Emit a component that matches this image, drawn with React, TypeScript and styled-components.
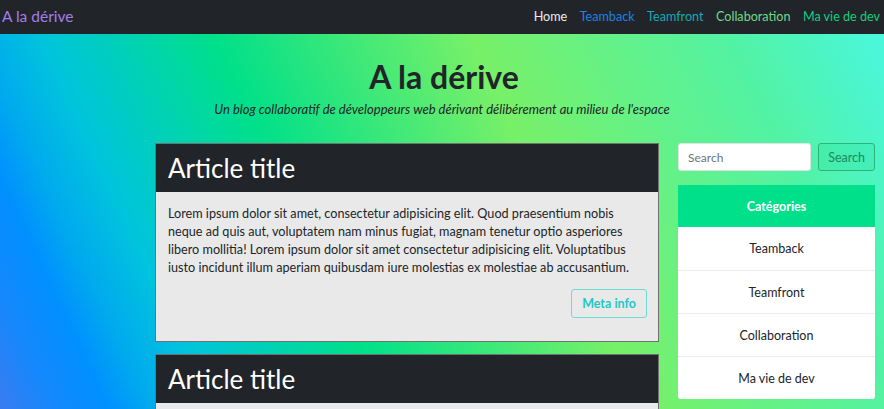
import React from "react";
import styled, { createGlobalStyle } from "styled-components";

const GlobalStyle = createGlobalStyle`
  html, body { margin: 0; padding: 0; }
  body {
    font-family: "Lato", "Noto Sans", "Liberation Sans", sans-serif;
    color: #212529;
    background: #212529;
  }
  * { box-sizing: border-box; }
`;

const Page = styled.div`
  min-height: 100vh;
  display: flex;
  flex-direction: column;
`;

const NavBar = styled.nav`
  height: 34px;
  background: #212529;
  display: flex;
  align-items: center;
  justify-content: space-between;
  padding: 0 4px 2px 2px;
`;

const Brand = styled.a`
  color: #a57ee9;
  font-size: 15.5px;
  text-decoration: none;
`;

const NavLinks = styled.div`
  display: flex;
  gap: 12.5px;
`;

const NavLink = styled.a<{ $color: string }>`
  color: ${(p) => p.$color};
  font-size: 12.6px;
  text-decoration: none;
`;

const Body = styled.div`
  flex: 1;
  background: linear-gradient(
    65deg,
    #3a7bf0 0%,
    #1588fc 5%,
    #0090ff 10%,
    #00aaee 14%,
    #00c4dc 20%,
    #00e08a 36%,
    #78f068 60%,
    #52f2a4 84%,
    #4af7d8 97%
  );
  background-attachment: fixed;
  padding-bottom: 20px;
`;

const Header = styled.header`
  text-align: center;
  padding: 24px 0 0 0;
`;

const Title = styled.h1`
  margin: 0 0 0 4px;
  font-size: 32px;
  font-weight: 700;
  color: #212529;
  line-height: 38px;
`;

const Subtitle = styled.p`
  margin: 4px 0 0 0;
  font-size: 13px;
  font-style: italic;
  color: #212529;
  line-height: 18px;
`;

const Content = styled.div`
  display: flex;
  align-items: flex-start;
  gap: 19px;
  padding: 25px 9px 0 155px;
`;

const Articles = styled.div`
  width: 504px;
  display: flex;
  flex-direction: column;
  gap: 12px;
`;

const Card = styled.article`
  border: 1px solid #707070;
  background: #e9e9e9;
`;

const CardHeader = styled.div`
  background: #212529;
  height: 48px;
  display: flex;
  align-items: center;
  padding: 0 12px;
`;

const CardTitle = styled.h2`
  margin: 0;
  color: #ffffff;
  font-size: 26px;
  font-weight: 400;
`;

const CardBody = styled.div`
  padding: 13px 11px 23px 12px;
  display: flex;
  flex-direction: column;
`;

const CardText = styled.p`
  margin: 0;
  font-size: 12.65px;
  line-height: 18px;
  color: #212529;
`;

const MetaButton = styled.button`
  align-self: flex-end;
  margin-top: 12px;
  height: 29px;
  padding: 0 10px;
  background: transparent;
  border: 1px solid #6fdad6;
  border-radius: 3px;
  color: #1cc8c8;
  font-family: inherit;
  font-weight: 700;
  font-size: 12.5px;
`;

const Sidebar = styled.aside`
  width: 197px;
  display: flex;
  flex-direction: column;
  gap: 14px;
`;

const SearchRow = styled.form`
  display: flex;
  gap: 7px;
`;

const SearchInput = styled.input`
  flex: 1;
  min-width: 0;
  height: 28px;
  border: 1px solid #dfe3e6;
  border-radius: 3px;
  background: #fff;
  padding: 0 9px;
  font-family: inherit;
  font-size: 12px;
  color: #212529;
  &::placeholder { color: #6c757d; }
`;

const SearchButton = styled.button`
  height: 28px;
  padding: 0 9px;
  border: 1px solid #2fb37a;
  border-radius: 3px;
  background: rgba(0, 200, 120, 0.12);
  color: #1e8a5c;
  font-family: inherit;
  font-size: 12.5px;
`;

const CatCard = styled.div`
  background: #fff;
  border-radius: 0 0 3px 3px;
  overflow: hidden;
`;

const CatHeader = styled.div`
  background: #00e08a;
  height: 42px;
  display: flex;
  align-items: center;
  justify-content: center;
  color: #fff;
  font-weight: 700;
  font-size: 12.5px;
`;

const CatItem = styled.a`
  display: flex;
  align-items: center;
  justify-content: center;
  height: 43px;
  color: #212529;
  font-size: 12.5px;
  text-decoration: none;
  & + & { border-top: 1px solid #ececec; }
`;

const lorem =
  "Lorem ipsum dolor sit amet, consectetur adipisicing elit. Quod praesentium nobis neque ad quis aut, voluptatem nam minus fugiat, magnam tenetur optio asperiores libero mollitia! Lorem ipsum dolor sit amet consectetur adipisicing elit. Voluptatibus iusto incidunt illum aperiam quibusdam iure molestias ex molestiae ab accusantium.";

const links = [
  { label: "Home", color: "#ececec" },
  { label: "Teamback", color: "#1b82e2" },
  { label: "Teamfront", color: "#15aab3" },
  { label: "Collaboration", color: "#6fd98a" },
  { label: "Ma vie de dev", color: "#12cf7f" },
];

const categories = ["Teamback", "Teamfront", "Collaboration", "Ma vie de dev"];

function Article() {
  return (
    <Card>
      <CardHeader>
        <CardTitle>Article title</CardTitle>
      </CardHeader>
      <CardBody>
        <CardText>{lorem}</CardText>
        <MetaButton>Meta info</MetaButton>
      </CardBody>
    </Card>
  );
}

export default function App() {
  return (
    <Page>
      <GlobalStyle />
      <NavBar>
        <Brand href="#">A la dérive</Brand>
        <NavLinks>
          {links.map((l) => (
            <NavLink key={l.label} href="#" $color={l.color}>
              {l.label}
            </NavLink>
          ))}
        </NavLinks>
      </NavBar>
      <Body>
        <Header>
          <Title>A la dérive</Title>
          <Subtitle>
            Un blog collaboratif de développeurs web dérivant délibérement au milieu de l'espace
          </Subtitle>
        </Header>
        <Content>
          <Articles>
            <Article />
            <Article />
          </Articles>
          <Sidebar>
            <SearchRow onSubmit={(e) => e.preventDefault()}>
              <SearchInput placeholder="Search" />
              <SearchButton type="submit">Search</SearchButton>
            </SearchRow>
            <CatCard>
              <CatHeader>Catégories</CatHeader>
              {categories.map((c) => (
                <CatItem key={c} href="#">
                  {c}
                </CatItem>
              ))}
            </CatCard>
          </Sidebar>
        </Content>
      </Body>
    </Page>
  );
}
